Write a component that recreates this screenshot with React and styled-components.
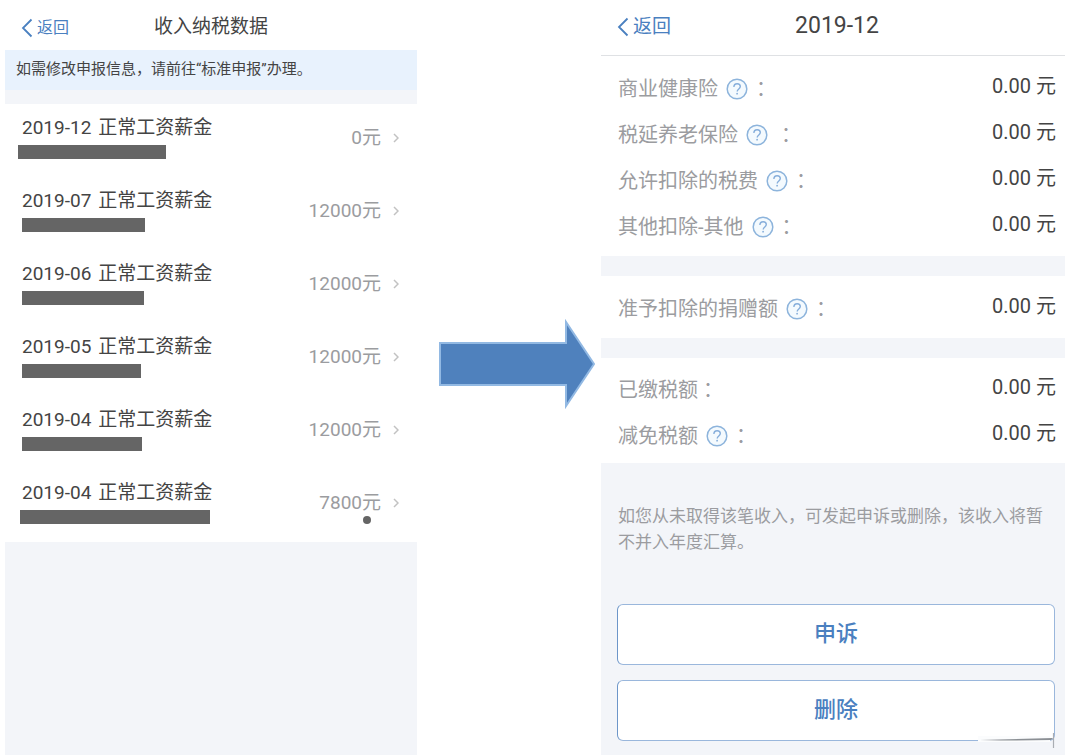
import React from 'react';
import styled, { createGlobalStyle, ThemeProvider } from 'styled-components';

const theme = {
  colors: {
    page: '#ffffff',
    panel: '#f3f5f9',
    notice: '#e8f2fd',
    text: '#444444',
    muted: '#9b9ca0',
    link: '#4a80c0',
    border: '#9ab7dc',
    mask: '#656565',
    arrow: '#4f81bd',
  },
};

const incomes = [
  { id: 1, month: '2019-12', amount: '0元', maskLeft: 13, maskWidth: 148 },
  { id: 2, month: '2019-07', amount: '12000元', maskLeft: 17, maskWidth: 123 },
  { id: 3, month: '2019-06', amount: '12000元', maskLeft: 17, maskWidth: 122 },
  { id: 4, month: '2019-05', amount: '12000元', maskLeft: 17, maskWidth: 119 },
  { id: 5, month: '2019-04', amount: '12000元', maskLeft: 17, maskWidth: 120 },
  {
    id: 6,
    month: '2019-04',
    amount: '7800元',
    maskLeft: 15,
    maskWidth: 190,
    marked: true,
  },
];

const sections = [
  [
    { label: '商业健康险', help: true },
    { label: '税延养老保险', help: true, wide: true },
    { label: '允许扣除的税费', help: true },
    { label: '其他扣除-其他', help: true },
  ],
  [{ label: '准予扣除的捐赠额', help: true }],
  [{ label: '已缴税额' }, { label: '减免税额', help: true }],
];

function BackLink({ large }) {
  return (
    <Back href="#back" $large={large}>
      <svg width="12" height="20" viewBox="0 0 12 20" aria-hidden="true">
        <path
          d="M10.5 1.5 2 10l8.5 8.5"
          fill="none"
          stroke="currentColor"
          strokeWidth="1.8"
        />
      </svg>
      返回
    </Back>
  );
}

function HelpIcon() {
  return (
    <svg width="22" height="22" viewBox="0 0 22 22" aria-hidden="true">
      <circle
        cx="11"
        cy="11"
        r="9.8"
        fill="#f4fafe"
        stroke="#8db4dc"
        strokeWidth="1.5"
      />
      <path
        d="M7.900 8.900c0-1.900 1.300-3.200 3.200-3.200s3.200 1.200 3.200 2.900c0 2.300-3.100 2.500-3.100 5"
        fill="none"
        stroke="#86aedb"
        strokeWidth="1.4"
      />
      <circle cx="11.1" cy="15.7" r="0.9" fill="#86aedb" />
    </svg>
  );
}

function IncomeList() {
  return (
    <Panel>
      <Header>
        <BackLink />
        <Title>收入纳税数据</Title>
      </Header>
      <Notice>如需修改申报信息，请前往“标准申报”办理。</Notice>
      <List>
        {incomes.map(income => (
          <Item key={income.id}>
            <div>
              <ItemTitle>
                <span>{income.month}</span>
                <span>正常工资薪金</span>
              </ItemTitle>
              <Mask $left={income.maskLeft} $width={income.maskWidth} />
            </div>
            <Amount>
              {income.amount}
              <svg width="6" height="10" viewBox="0 0 6 10" aria-hidden="true">
                <path
                  d="M1 1l4 4-4 4"
                  fill="none"
                  stroke="#c2c2c2"
                  strokeWidth="1.5"
                />
              </svg>
              {income.marked && <Dot />}
            </Amount>
          </Item>
        ))}
      </List>
    </Panel>
  );
}

function IncomeDetail() {
  return (
    <Panel>
      <Header $large>
        <BackLink large />
        <Title $large>2019-12</Title>
      </Header>
      <Sections>
        {sections.map(rows => (
          <Section key={rows[0].label}>
            {rows.map(row => (
              <Row key={row.label}>
                <Label>
                  {row.label}
                  {row.help && (
                    <Help type="button" aria-label="说明" $wide={row.wide}>
                      <HelpIcon />
                    </Help>
                  )}
                  <Colon>：</Colon>
                </Label>
                <Value>0.00 元</Value>
              </Row>
            ))}
          </Section>
        ))}
      </Sections>
      <Tip>
        如您从未取得该笔收入，可发起申诉或删除，该收入将暂不并入年度汇算。
      </Tip>
      <Actions>
        <ActionButton type="button">申诉</ActionButton>
        <ActionButton type="button">删除</ActionButton>
        <Scratch width="78" height="22" viewBox="0 0 78 22" aria-hidden="true">
          <path d="M0 8h72v6H0z" fill="#fbfcfd" />
          <path d="M2 12 75 10l-2 2-50 .6z" fill="#8b8f94" />
          <path d="M75.500 5v15" stroke="#a9adb3" strokeWidth="1.2" />
        </Scratch>
      </Actions>
    </Panel>
  );
}

export default function App() {
  return (
    <ThemeProvider theme={theme}>
      <GlobalStyle />
      <Page>
        <IncomeList />
        <ArrowColumn>
          <svg width="158" height="90" viewBox="0 0 158 90" aria-hidden="true">
            <path
              d="M2 24H128V3L156 45 128 87V66H2z"
              fill={theme.colors.arrow}
              stroke="#92b9e3"
              strokeWidth="2"
            />
          </svg>
        </ArrowColumn>
        <IncomeDetail />
      </Page>
    </ThemeProvider>
  );
}

const GlobalStyle = createGlobalStyle`
  * {
    box-sizing: border-box;
  }

  body {
    margin: 0;
    background-color: #ffffff;
    font-family: Roboto, 'Noto Sans CJK SC', sans-serif;
  }

  svg {
    display: block;
    flex-shrink: 0;
  }
`;

const Page = styled.div`
  display: grid;
  grid-template-columns: 412fr 184px 464fr;
  min-height: 100vh;
  padding-left: 5px;
`;

const Panel = styled.section`
  display: flex;
  flex-direction: column;
  min-width: 0;
  background-color: ${props => props.theme.colors.panel};
`;

const Header = styled.header`
  display: grid;
  grid-template-columns: 1fr auto 1fr;
  align-items: center;
  height: ${props => (props.$large ? '56px' : '50px')};
  padding: ${props => (props.$large ? '0 8px 4px 16px' : '4px 16px 0')};
  background-color: ${props => props.theme.colors.page};
  border-bottom: ${props => (props.$large ? '1px solid #dfe1e4' : '0')};
`;

const Back = styled.a`
  display: flex;
  align-items: center;
  gap: 4px;
  padding-top: 2px;
  color: ${props => props.theme.colors.link};
  font-size: ${props => (props.$large ? '19px' : '16px')};
  line-height: 24px;
  text-decoration: none;
`;

const Title = styled.h1`
  margin: 0;
  color: ${props => props.theme.colors.text};
  font-size: ${props => (props.$large ? '23px' : '19px')};
  font-weight: 400;
  line-height: 28px;
`;

const Notice = styled.p`
  height: 40px;
  margin: 0 0 14px;
  padding: 0 11px;
  background-color: ${props => props.theme.colors.notice};
  color: ${props => props.theme.colors.text};
  font-size: 15px;
  line-height: 38px;
`;

const List = styled.ul`
  margin: 0;
  padding: 0;
  background-color: ${props => props.theme.colors.page};
  list-style: none;
`;

const Item = styled.li`
  display: flex;
  justify-content: space-between;
  height: 73px;
  padding: 13px 18px 0 0;
`;

const ItemTitle = styled.div`
  display: flex;
  gap: 7px;
  padding-left: 17px;
  color: ${props => props.theme.colors.text};
  font-size: 19px;
  line-height: 22px;
`;

const Mask = styled.div`
  width: ${props => props.$width}px;
  height: 14px;
  margin: 6px 0 0 ${props => props.$left}px;
  background-color: ${props => props.theme.colors.mask};
`;

const Amount = styled.div`
  position: relative;
  display: flex;
  align-items: center;
  gap: 12px;
  height: 42px;
  color: ${props => props.theme.colors.muted};
  font-size: 19px;
  line-height: 22px;
`;

const Dot = styled.span`
  position: absolute;
  right: 28px;
  bottom: 0;
  width: 8px;
  height: 8px;
  border-radius: 50%;
  background-color: ${props => props.theme.colors.mask};
`;

const ArrowColumn = styled.div`
  display: flex;
  justify-content: flex-end;
  padding: 319px 5px 0 0;
`;

const Sections = styled.div`
  display: flex;
  flex-direction: column;
  gap: 20px;
`;

const Section = styled.div`
  padding: 8px 9px 8px 17px;
  background-color: ${props => props.theme.colors.page};

  &:last-child {
    padding: 7px 9px 6px 17px;
  }
`;

const Row = styled.div`
  display: flex;
  align-items: center;
  justify-content: space-between;
  height: 46px;
`;

const Label = styled.div`
  display: flex;
  align-items: center;
  padding-top: 3px;
  color: ${props => props.theme.colors.muted};
  font-size: 20px;
  line-height: 24px;
`;

const Help = styled.button`
  margin: 0 ${props => (props.$wide ? '8px' : '3px')} 0 8px;
  padding: 0;
  border: 0;
  background: none;
  cursor: pointer;
`;

const Colon = styled.span`
  font-family: 'Noto Sans CJK TC', sans-serif;
`;

const Value = styled.div`
  padding-bottom: 2px;
  color: ${props => props.theme.colors.text};
  font-size: 20px;
  line-height: 24px;
`;

const Tip = styled.p`
  margin: 0;
  padding: 40px 10px 0 17px;
  color: ${props => props.theme.colors.muted};
  font-size: 17px;
  line-height: 26px;
`;

const Actions = styled.div`
  position: relative;
  display: flex;
  flex-direction: column;
  gap: 15px;
  padding: 49px 10px 12px 16px;
`;

const ActionButton = styled.button`
  height: 61px;
  padding: 0 0 8px;
  border: 1px solid ${props => props.theme.colors.border};
  border-left-color: #6d96c9;
  border-radius: 6px;
  background-color: ${props => props.theme.colors.page};
  color: ${props => props.theme.colors.link};
  font-family: inherit;
  font-size: 22px;
  font-weight: 500;
  cursor: pointer;
`;

const Scratch = styled.svg`
  position: absolute;
  right: 9px;
  bottom: 3px;
`;
